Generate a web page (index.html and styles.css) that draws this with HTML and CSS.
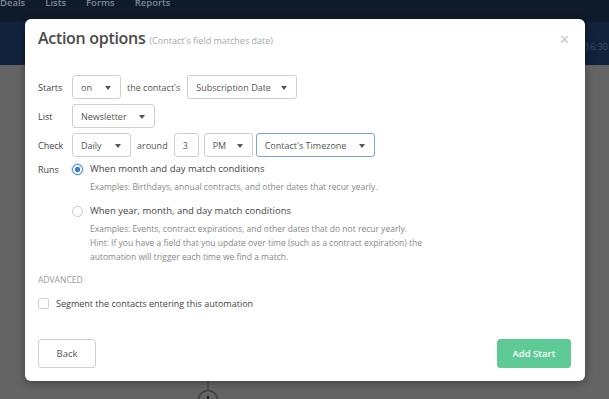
FILE: index.html
```html
<!DOCTYPE html>
<html lang="en">
<head>
    <meta charset="UTF-8">
    <title>Action options</title>
    <link rel="stylesheet" href="styles.css">
</head>
<body>
    <div class="app">
        <nav class="topnav">
            <span>Deals</span>
            <span>Lists</span>
            <span>Forms</span>
            <span>Reports</span>
        </nav>
        <div class="subbar"><span class="time">16:30</span></div>
        <div class="canvas">
            <svg class="node" width="24" height="40" viewBox="0 0 24 40">
                <line x1="12" y1="0" x2="12" y2="21" stroke="#4a4a4a" stroke-width="1.5"/>
                <circle cx="12" cy="31" r="9.5" fill="none" stroke="#3e3e3e" stroke-width="1.5"/>
                <line x1="12" y1="27" x2="12" y2="40" stroke="#1e1e1e" stroke-width="2"/>
            </svg>
        </div>
    </div>

    <div class="modal">
        <div class="modal-head">
            <h2>Action options</h2>
            <span class="sub">(Contact's field matches date)</span>
            <span class="close">&#x2715;</span>
        </div>

        <div class="form">
            <div class="row">
                <span class="label">Starts</span>
                <span class="select w-on">on</span>
                <span class="text">the contact's</span>
                <span class="select w-field">Subscription Date</span>
            </div>
            <div class="row">
                <span class="label">List</span>
                <span class="select w-list">Newsletter</span>
            </div>
            <div class="row">
                <span class="label">Check</span>
                <span class="select w-daily">Daily</span>
                <span class="text">around</span>
                <span class="input">3</span>
                <span class="select w-pm">PM</span>
                <span class="select w-tz focus">Contact's Timezone</span>
            </div>

            <div class="runs">
                <span class="label">Runs</span>
                <div class="options">
                    <div class="option">
                        <span class="radio checked"></span>
                        <div>
                            <div class="opt-title">When month and day match conditions</div>
                            <div class="opt-desc">Examples: Birthdays, annual contracts, and other dates that recur yearly.</div>
                        </div>
                    </div>
                    <div class="option">
                        <span class="radio"></span>
                        <div>
                            <div class="opt-title">When year, month, and day match conditions</div>
                            <div class="opt-desc">Examples: Events, contract expirations, and other dates that do not recur yearly.<br>Hint: If you have a field that you update over time (such as a contract expiration) the automation will trigger each time we find a match.</div>
                        </div>
                    </div>
                </div>
            </div>

            <div class="advanced">ADVANCED</div>
            <label class="check"><span class="box"></span>Segment the contacts entering this automation</label>
        </div>

        <div class="modal-foot">
            <button class="btn">Back</button>
            <button class="btn primary">Add Start</button>
        </div>
    </div>
</body>
</html>
```

FILE: styles.css
```css
* {
    box-sizing: border-box;
}
body {
    margin: 0;
    font-family: 'Open Sans', 'Liberation Sans', sans-serif;
    background: #646464;
    width: 609px;
    height: 399px;
    overflow: hidden;
    position: relative;
}
.app {
    height: 399px;
    display: flex;
    flex-direction: column;
}
.topnav {
    height: 22px;
    background: #0f1a2a;
    display: flex;
    gap: 20px;
    padding-left: 0;
    font-size: 9.5px;
    font-weight: 600;
    line-height: 5px;
    color: #7e8999;
    overflow: hidden;
}
.subbar {
    height: 43px;
    background: #12223c;
    display: flex;
    justify-content: flex-end;
    align-items: center;
    padding-top: 6px;
}
.time {
    font-size: 9px;
    color: #3b4c68;
    margin-right: 1px;
}
.canvas {
    flex: 1;
    background: #646464;
    position: relative;
}
.node {
    position: absolute;
    left: 196px;
    top: 304px;
}

/* modal */
.modal {
    position: absolute;
    top: 19px;
    left: 25px;
    width: 560px;
    height: 362px;
    background: #fff;
    border-radius: 6px;
    box-shadow: 0 2px 8px rgba(0, 0, 0, 0.35);
    display: flex;
    flex-direction: column;
    padding: 0 14px 13px 13px;
    color: #444;
}
.modal-head {
    display: flex;
    align-items: baseline;
    height: 44px;
    padding-top: 8px;
}
.modal-head h2 {
    margin: 0;
    font-size: 16px;
    font-weight: 600;
    color: #4a4a4a;
    letter-spacing: -0.3px;
}
.sub {
    margin-left: 4px;
    font-size: 9px;
    color: #a8a8a8;
}
.close {
    margin-left: auto;
    align-self: flex-start;
    margin-top: 3px;
    font-size: 13px;
    color: #c8c8c8;
    margin-right: 1px;
}

.form {
    flex: 1;
    padding-top: 12px;
    font-size: 9px;
}
.row {
    display: flex;
    align-items: center;
    gap: 6px;
    margin-bottom: 5px;
}
.label {
    width: 28px;
    flex-shrink: 0;
    color: #444;
}
.text {
    color: #555;
}
.select,
.input {
    height: 24px;
    border: 1px solid #cfcfcf;
    border-radius: 3px;
    display: flex;
    align-items: center;
    padding-left: 8px;
    color: #555;
    position: relative;
    background: #fff;
    flex-shrink: 0;
}
.select::after {
    content: "";
    position: absolute;
    right: 9px;
    top: 10px;
    border-left: 3.5px solid transparent;
    border-right: 3.5px solid transparent;
    border-top: 4px solid #555;
}
.focus {
    border-color: #7ba4dc;
}
.w-on { width: 49px; }
.w-field { width: 110px; margin-left: 1px; }
.w-list { width: 83px; }
.w-daily { width: 59px; }
.input { width: 25px; }
.w-pm { width: 49px; margin-left: -1px; }
.w-tz { width: 119px; margin-left: -3px; }

.runs {
    display: flex;
    margin-top: 1px;
}
.runs .label {
    width: 34px;
    padding-top: 1px;
}
.options {
    display: flex;
    flex-direction: column;
    gap: 10px;
}
.option {
    display: flex;
    gap: 7px;
}
.radio {
    width: 11px;
    height: 11px;
    border-radius: 50%;
    border: 1px solid #c8c8c8;
    margin-top: 2px;
    flex-shrink: 0;
}
.radio.checked {
    border-color: #3d7ed5;
    background: radial-gradient(circle, #3d7ed5 0 2.5px, #fff 3px);
    box-shadow: 0 0 0 1px rgba(61, 126, 213, 0.25);
}
.opt-title {
    color: #444;
    font-size: 9.5px;
    line-height: 14px;
}
.opt-desc {
    margin-top: 4px;
    max-width: 365px;
    color: #888;
    font-size: 8.5px;
    line-height: 14px;
}
.advanced {
    margin-top: 10px;
    font-size: 8.5px;
    color: #999;
}
.check {
    display: flex;
    align-items: center;
    gap: 7px;
    margin-top: 12px;
    color: #444;
}
.box {
    width: 11px;
    height: 11px;
    border: 1px solid #ccd3dc;
    border-radius: 2px;
}

.modal-foot {
    display: flex;
    justify-content: space-between;
}
.btn {
    height: 29px;
    width: 58px;
    border: 1px solid #cfcfcf;
    border-radius: 3px;
    background: #fff;
    font-family: 'Open Sans', sans-serif;
    font-size: 9.5px;
    color: #555;
}
.btn.primary {
    width: 74px;
    border-color: #5ecb96;
    background: #5ecb96;
    color: #fff;
    font-weight: 600;
}
```
